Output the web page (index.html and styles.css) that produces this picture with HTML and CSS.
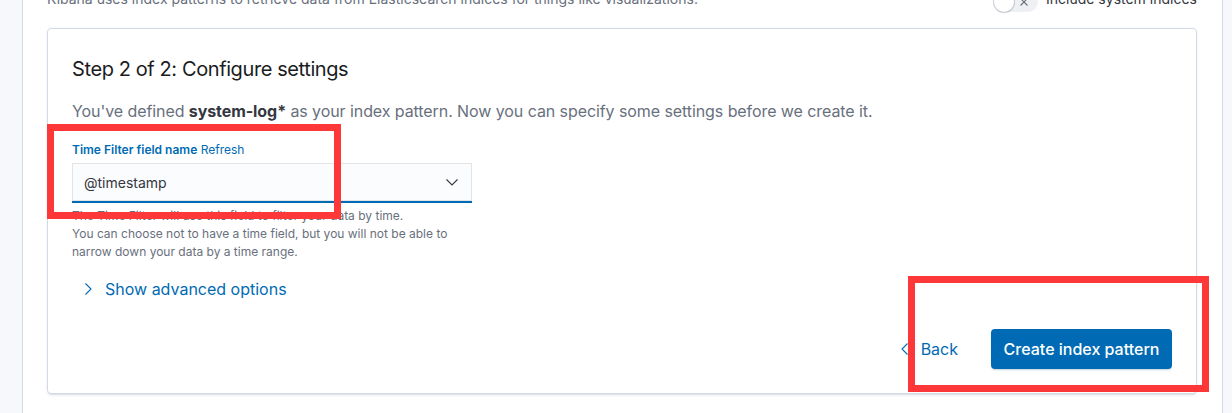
FILE: index.html
```html
<!DOCTYPE html>
<html>
<head>
<meta charset="utf-8">
<link rel="stylesheet" href="styles.css">
</head>
<body>
<div class="page">
  <aside class="side side-left"></aside>
  <main class="main">
    <div class="header">
      <p class="intro">Kibana uses index patterns to retrieve data from Elasticsearch indices for things like visualizations.</p>
      <div class="switch">
        <span class="track"><span class="knob"></span>
          <svg class="x" width="10" height="10" viewBox="0 0 10 10"><path d="M1.5 1.5l7 7M8.5 1.5l-7 7" stroke="#69707d" stroke-width="1.1" fill="none"/></svg>
        </span>
        <span class="switch-label">Include system indices</span>
      </div>
    </div>
    <section class="card">
      <h2 class="title">Step 2 of 2: Configure settings</h2>
      <p class="desc">You've defined <strong>system-log*</strong> as your index pattern. Now you can specify some settings before we create it.</p>
      <div class="form-row">
        <div class="label"><span class="label-strong">Time Filter field name</span> <span class="label-link">Refresh</span></div>
        <div class="select">
          <span>@timestamp</span>
          <svg width="16" height="16" viewBox="0 0 16 16"><path d="M2.5 5.5l5.5 5.5 5.5-5.5" stroke="#343741" stroke-width="1.1" fill="none"/></svg>
        </div>
        <div class="help">The Time Filter will use this field to filter your data by time.<br>You can choose not to have a time field, but you will not be able to<br>narrow down your data by a time range.</div>
      </div>
      <div class="advanced">
        <svg width="16" height="16" viewBox="0 0 16 16"><path d="M5.5 2.5l5.5 5.5-5.5 5.5" stroke="#006bb4" stroke-width="1.1" fill="none"/></svg>
        <span>Show advanced options</span>
      </div>
      <div class="actions">
        <button class="btn-empty">
          <svg width="16" height="16" viewBox="0 0 16 16"><path d="M10.5 2.5L5 8l5.5 5.5" stroke="#006bb4" stroke-width="1.1" fill="none"/></svg>
          <span>Back</span>
        </button>
        <button class="btn-primary">Create index pattern</button>
      </div>
    </section>
  </main>
  <aside class="side side-right"></aside>
  <div class="mark mark-1"></div>
  <div class="mark mark-2"></div>
</div>
</body>
</html>
```

FILE: styles.css
```css
* { box-sizing: border-box; }
html, body { margin: 0; padding: 0; }
body {
  font-family: Inter, "Noto Sans", "Liberation Sans", sans-serif;
  background: #fff;
  color: #343741;
  overflow: hidden;
}
.page {
  position: relative;
  display: flex;
  width: 1232px;
  height: 413px;
  overflow: hidden;
}
.side {
  background: #f7f8fc;
  flex: none;
}
.side-left { width: 23px; border-right: 1px solid #d3dae6; }
.side-right { width: 10px; border-left: 1px solid #d3dae6; }
.main {
  flex: 1;
  padding: 0 25px 0 24px;
}
.header {
  display: flex;
  justify-content: space-between;
  align-items: flex-start;
  height: 20px;
  margin-top: -11px;
}
.intro {
  margin: 0;
  font-size: 14px;
  line-height: 20px;
  color: #69707d;
}
.switch {
  display: flex;
  align-items: center;
  gap: 8px;
  margin-top: 3px;
}
.track {
  position: relative;
  width: 44px;
  height: 20px;
  border-radius: 10px;
  background: #eef0f3;
  display: block;
}
.knob {
  position: absolute;
  left: 0;
  top: 0;
  width: 20px;
  height: 20px;
  border-radius: 50%;
  background: #fff;
  box-shadow: 0 0 0 1px rgba(152,162,179,.45), 0 1px 2px rgba(0,0,0,.1);
}
.x { position: absolute; left: 25px; top: 5px; }
.switch-label {
  font-size: 14px;
  line-height: 20px;
  color: #343741;
  margin-top: -6px;
}
.card {
  margin-top: 19px;
  width: 1150px;
  border: 1px solid #d3dae6;
  border-radius: 4px;
  padding: 24px;
  background: #fff;
  box-shadow: 0 2px 2px -1px rgba(152,162,179,.3), 0 1px 5px -2px rgba(152,162,179,.3);
}
.title {
  margin: 0;
  font-size: 20px;
  line-height: 32px;
  font-weight: 400;
  letter-spacing: -0.02em;
  color: #1a1c21;
}
.desc {
  margin: 14px 0 0;
  font-size: 16px;
  line-height: 24px;
  letter-spacing: -0.005em;
  color: #69707d;
}
.desc strong { color: #343741; font-weight: 700; }
.form-row { margin-top: 18px; width: 400px; }
.label {
  font-size: 12px;
  line-height: 18px;
  margin-bottom: 4px;
  color: #006bb4;
}
.label-strong { font-weight: 600; }
.select {
  height: 40px;
  background: #fbfcfd;
  box-shadow: inset 0 0 0 1px rgba(16,22,26,.1);
  border-bottom: 2px solid #006bb4;
  display: flex;
  align-items: center;
  justify-content: space-between;
  padding: 0 12px;
  font-size: 14px;
  color: #343741;
}
.help {
  margin-top: 4px;
  font-size: 12px;
  line-height: 18px;
  color: #69707d;
}
.advanced {
  margin-top: 16px;
  display: flex;
  align-items: center;
  gap: 9px;
  padding-left: 8px;
  font-size: 16px;
  line-height: 24px;
  color: #006bb4;
}
.advanced svg { flex: none; }
.actions {
  margin-top: 28px;
  display: flex;
  justify-content: flex-end;
  align-items: center;
  gap: 25px;
}
button { font-family: inherit; cursor: pointer; }
.btn-empty {
  display: flex;
  align-items: center;
  gap: 8px;
  height: 40px;
  padding: 0 8px;
  background: none;
  border: 0;
  font-size: 16px;
  color: #006bb4;
}
.btn-primary {
  height: 40px;
  width: 181px;
  background: #006bb4;
  border: 0;
  border-radius: 4px;
  color: #fff;
  font-size: 16px;
  font-weight: 500;
  box-shadow: 0 2px 2px -1px rgba(54,97,126,.3);
}
.mark {
  position: absolute;
  border: 7px solid #fe3838;
  pointer-events: none;
}
.mark-1 { left: 47px; top: 124px; width: 294px; height: 95px; }
.mark-2 { left: 908px; top: 276px; width: 301px; height: 116px; }
```
